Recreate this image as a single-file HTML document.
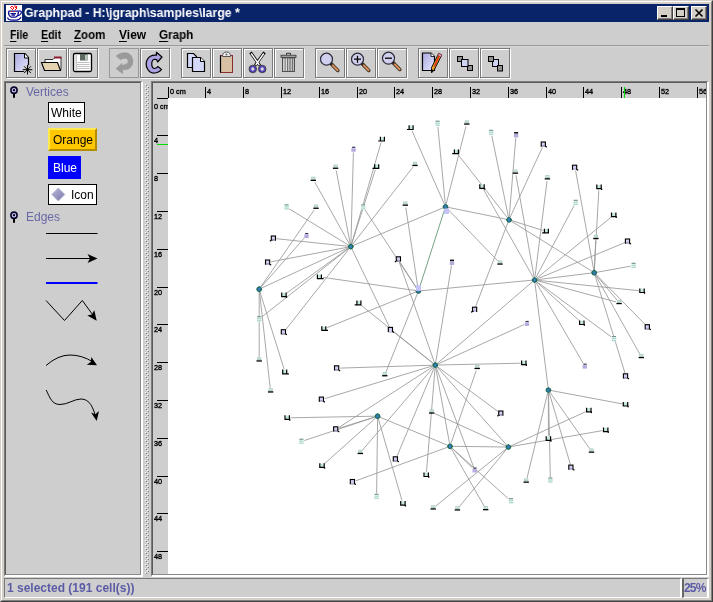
<!DOCTYPE html>
<html><head><meta charset="utf-8"><title>Graphpad</title>
<style>
html,body{margin:0;padding:0;}
body{width:713px;height:602px;position:relative;overflow:hidden;background:#d4d0c8;font-family:"Liberation Sans",sans-serif;}
.a{position:absolute;}
.rl,.menu,.lbl,.vx,#title span,.st{will-change:transform;}
#inner{left:4px;top:22px;width:705px;height:576px;background:#cecece;}
#title{left:4px;top:4px;width:705px;height:18px;background:#0a246a;color:#fff;font-weight:bold;font-size:13px;line-height:18px;}
#title span{position:absolute;left:20px;top:0;white-space:nowrap;transform-origin:0 50%;transform:scaleX(0.942);}
.wb{position:absolute;top:2px;width:16px;height:14px;background:#d4d0c8;box-sizing:border-box;border:1px solid;border-color:#fff #404040 #404040 #fff;box-shadow:inset -1px -1px 0 #808080;}
.menu{top:28px;font-weight:bold;font-size:12px;color:#000;line-height:14px;white-space:nowrap;}
.menu u{text-decoration:underline;text-decoration-thickness:1px;text-underline-offset:1.5px;}
.tb{top:48px;width:30px;height:30px;box-sizing:border-box;border:1px solid #7a7a7a;box-shadow:1px 1px 0 #fff, inset 1px 1px 0 #fff;}
.tbd{top:48px;width:30px;height:30px;box-sizing:border-box;border:1px solid #999;}
.lbl{color:#6868a6;font-size:12px;line-height:14px;}
.vx{box-sizing:border-box;font-size:12px;line-height:14px;color:#000;white-space:nowrap;}
.rt{background:#000;}
.rl{font-size:7.3px;line-height:8px;color:#000;white-space:nowrap;overflow:hidden;-webkit-text-stroke:0.35px #000;}
</style></head><body>
<div class="a" style="left:0;top:0;width:713px;height:602px;box-sizing:border-box;border:1px solid;border-color:#d4d0c8 #404040 #404040 #d4d0c8;"></div>
<div class="a" style="left:1px;top:1px;width:711px;height:600px;box-sizing:border-box;border:1px solid;border-color:#fff #808080 #808080 #fff;"></div>
<div class="a" id="title"><span>Graphpad - H:\jgraph\samples\large *</span>
<div class="wb" style="left:653px"><div class="a" style="left:3px;top:8px;width:6px;height:2px;background:#000"></div></div>
<div class="wb" style="left:669px"><div class="a" style="left:2px;top:1px;width:9px;height:9px;box-sizing:border-box;border:1px solid #000;border-top-width:2px"></div></div>
<div class="wb" style="left:687px"><svg class="a" style="left:0;top:0" width="14" height="12"><path d="M3.5 2.5 L10.5 9.5 M10.5 2.5 L3.5 9.5" stroke="#000" stroke-width="1.6" fill="none"/></svg></div>
</div>
<div class="a" id="inner"></div>

<div class="a menu" style="left:10px;transform-origin:0 0;transform:scaleX(0.88)"><u>F</u>ile</div>
<div class="a menu" style="left:41px;transform-origin:0 0;transform:scaleX(0.89)"><u>E</u>dit</div>
<div class="a menu" style="left:74px;transform-origin:0 0;transform:scaleX(0.96)"><u>Z</u>oom</div>
<div class="a menu" style="left:119px;transform-origin:0 0;transform:scaleX(1.0)"><u>V</u>iew</div>
<div class="a menu" style="left:159px;transform-origin:0 0;transform:scaleX(0.97)"><u>G</u>raph</div>
<div class="a" style="left:4px;top:45px;width:705px;height:1px;background:#999;"></div>
<div class="a" style="left:4px;top:46px;width:705px;height:1px;background:#d8d8d8;"></div>
<div class="a tb" style="left:6px"></div>
<div class="a tb" style="left:37px"></div>
<div class="a tb" style="left:68px"></div>
<div class="a tbd" style="left:109px"></div>
<div class="a tb" style="left:140px"></div>
<div class="a tb" style="left:181px"></div>
<div class="a tb" style="left:212px"></div>
<div class="a tb" style="left:243px"></div>
<div class="a tb" style="left:274px"></div>
<div class="a tb" style="left:315px"></div>
<div class="a tb" style="left:346px"></div>
<div class="a tb" style="left:377px"></div>
<div class="a tb" style="left:418px"></div>
<div class="a tb" style="left:449px"></div>
<div class="a tb" style="left:480px"></div>
<div class="a" style="left:4px;top:81px;width:139px;height:496px;box-sizing:border-box;border-style:solid;border-width:1px 2px 2px 1px;border-color:#7c7c7c #fff #fff #7c7c7c;"></div>
<div class="a" style="left:5px;top:82px;width:136px;height:493px;box-sizing:border-box;border:1px solid;border-color:#5a5a5a #8a8a8a #8a8a8a #5a5a5a;"></div>
<div class="a lbl" style="left:26px;top:85px;">Vertices</div>
<div class="a lbl" style="left:26px;top:210px;">Edges</div>
<div class="a vx" style="left:48px;top:102px;width:37px;height:21px;border:1px solid #000;background:#fff;padding:3px 0 0 2px;">White</div>
<div class="a vx" style="left:48px;top:128px;width:49px;height:23px;background:#ffc800;border:2px solid;border-color:#ffe94d #b38c00 #b38c00 #ffe94d;padding:3px 0 0 3px;">Orange</div>
<div class="a vx" style="left:48px;top:156px;width:33px;height:23px;background:#0000ff;color:#fff;padding:5px 0 0 5px;">Blue</div>
<div class="a vx" style="left:48px;top:184px;width:49px;height:21px;border:1px solid #000;background:#fff;padding:3px 0 0 22px;">Icon</div>

<div class="a" style="left:151px;top:81px;width:558px;height:496px;box-sizing:border-box;border-style:solid;border-width:1px 2px 2px 1px;border-color:#7c7c7c #fff #fff #7c7c7c;"></div>
<div class="a" style="left:152px;top:82px;width:555px;height:493px;box-sizing:border-box;border:1px solid;border-color:#5a5a5a #8a8a8a #8a8a8a #5a5a5a;background:#cecece;"></div>
<div class="a" style="left:168px;top:98px;width:538px;height:476px;background:#fff;"></div>

<div class="a rt" style="left:168px;top:87px;width:1px;height:11px"></div>
<div class="a rl" style="left:170px;top:87.5px;max-width:536px">0 cm</div>
<div class="a rt" style="left:205px;top:87px;width:1px;height:11px"></div>
<div class="a rl" style="left:207px;top:87.5px;max-width:499px">4</div>
<div class="a rt" style="left:243px;top:87px;width:1px;height:11px"></div>
<div class="a rl" style="left:245px;top:87.5px;max-width:461px">8</div>
<div class="a rt" style="left:281px;top:87px;width:1px;height:11px"></div>
<div class="a rl" style="left:283px;top:87.5px;max-width:423px">12</div>
<div class="a rt" style="left:319px;top:87px;width:1px;height:11px"></div>
<div class="a rl" style="left:321px;top:87.5px;max-width:385px">16</div>
<div class="a rt" style="left:357px;top:87px;width:1px;height:11px"></div>
<div class="a rl" style="left:359px;top:87.5px;max-width:347px">20</div>
<div class="a rt" style="left:394px;top:87px;width:1px;height:11px"></div>
<div class="a rl" style="left:396px;top:87.5px;max-width:310px">24</div>
<div class="a rt" style="left:432px;top:87px;width:1px;height:11px"></div>
<div class="a rl" style="left:434px;top:87.5px;max-width:272px">28</div>
<div class="a rt" style="left:470px;top:87px;width:1px;height:11px"></div>
<div class="a rl" style="left:472px;top:87.5px;max-width:234px">32</div>
<div class="a rt" style="left:508px;top:87px;width:1px;height:11px"></div>
<div class="a rl" style="left:510px;top:87.5px;max-width:196px">36</div>
<div class="a rt" style="left:546px;top:87px;width:1px;height:11px"></div>
<div class="a rl" style="left:548px;top:87.5px;max-width:158px">40</div>
<div class="a rt" style="left:583px;top:87px;width:1px;height:11px"></div>
<div class="a rl" style="left:585px;top:87.5px;max-width:121px">44</div>
<div class="a rt" style="left:621px;top:87px;width:1px;height:11px"></div>
<div class="a rl" style="left:623px;top:87.5px;max-width:83px">48</div>
<div class="a rt" style="left:659px;top:87px;width:1px;height:11px"></div>
<div class="a rl" style="left:661px;top:87.5px;max-width:45px">52</div>
<div class="a rt" style="left:697px;top:87px;width:1px;height:11px"></div>
<div class="a rl" style="left:699px;top:87.5px;max-width:7px">56</div>
<div class="a rt" style="left:157px;top:98px;width:11px;height:1px"></div>
<div class="a rl" style="left:154px;width:14px;top:102.5px">0 cm</div>
<div class="a rt" style="left:157px;top:135px;width:11px;height:1px"></div>
<div class="a rl" style="left:154px;width:14px;top:137px">4</div>
<div class="a rt" style="left:157px;top:173px;width:11px;height:1px"></div>
<div class="a rl" style="left:154px;width:14px;top:175px">8</div>
<div class="a rt" style="left:157px;top:211px;width:11px;height:1px"></div>
<div class="a rl" style="left:154px;width:14px;top:213px">12</div>
<div class="a rt" style="left:157px;top:249px;width:11px;height:1px"></div>
<div class="a rl" style="left:154px;width:14px;top:251px">16</div>
<div class="a rt" style="left:157px;top:287px;width:11px;height:1px"></div>
<div class="a rl" style="left:154px;width:14px;top:289px">20</div>
<div class="a rt" style="left:157px;top:324px;width:11px;height:1px"></div>
<div class="a rl" style="left:154px;width:14px;top:326px">24</div>
<div class="a rt" style="left:157px;top:362px;width:11px;height:1px"></div>
<div class="a rl" style="left:154px;width:14px;top:364px">28</div>
<div class="a rt" style="left:157px;top:400px;width:11px;height:1px"></div>
<div class="a rl" style="left:154px;width:14px;top:402px">32</div>
<div class="a rt" style="left:157px;top:438px;width:11px;height:1px"></div>
<div class="a rl" style="left:154px;width:14px;top:440px">36</div>
<div class="a rt" style="left:157px;top:476px;width:11px;height:1px"></div>
<div class="a rl" style="left:154px;width:14px;top:478px">40</div>
<div class="a rt" style="left:157px;top:513px;width:11px;height:1px"></div>
<div class="a rl" style="left:154px;width:14px;top:515px">44</div>
<div class="a rt" style="left:157px;top:551px;width:11px;height:1px"></div>
<div class="a rl" style="left:154px;width:14px;top:553px">48</div>
<div class="a" style="left:624px;top:87px;width:1px;height:11px;background:#00e000"></div>
<div class="a" style="left:157px;top:144px;width:11px;height:1px;background:#00e000"></div>
<div class="a" style="left:4px;top:578px;width:678px;height:20px;box-sizing:border-box;border-style:solid;border-width:1px 2px 1px 1px;border-color:#777 #fff #fff #777;"></div>
<div class="a" style="left:682px;top:578px;width:27px;height:20px;box-sizing:border-box;border-style:solid;border-width:1px 2px 1px 2px;border-color:#777 #fff #fff #666;"></div>
<div class="a st" style="left:7px;top:581px;font-weight:bold;font-size:12px;line-height:15px;color:#5c5ca6;white-space:nowrap;">1 selected (191 cell(s))</div>
<div class="a st" style="left:684px;top:581px;font-weight:bold;font-size:12px;line-height:15px;color:#5c5ca6;letter-spacing:-0.8px;">25%</div>

<svg class="a" style="left:0;top:0" width="713" height="602" viewBox="0 0 713 602">
<defs>
<linearGradient id="gp" x1="0" y1="0" x2="1" y2="1"><stop offset="0" stop-color="#a8a8e0"/><stop offset="1" stop-color="#e8e8ff"/></linearGradient>
<linearGradient id="gd" x1="0" y1="0" x2="1" y2="1"><stop offset="0" stop-color="#b8b8dc"/><stop offset="1" stop-color="#7878a8"/></linearGradient>
<pattern id="bump" x="145" y="84" width="4" height="4" patternUnits="userSpaceOnUse"><rect x="0" y="0" width="1" height="1" fill="#fff"/><rect x="1" y="1" width="1" height="1" fill="#7a7a7a"/><rect x="2" y="2" width="1" height="1" fill="#fff"/><rect x="3" y="3" width="1" height="1" fill="#7a7a7a"/></pattern>
</defs>
<rect x="145" y="84" width="4" height="490" fill="url(#bump)" shape-rendering="crispEdges"/>
<!-- java cup -->
<g shape-rendering="crispEdges"><rect x="6" y="5" width="16" height="16" fill="#fff"/></g>
<g fill="none" stroke="#0a0a8c" stroke-width="1.25">
<path d="M8.500 11 H18.500 M8.500 11.500 Q8.300 15.500 11 17 M18.500 11.500 Q18.500 15.500 16 17 M11 17 H16 M10.500 13.500 H16 M11.500 15.200 H15"/>
<path d="M18.500 11 Q22.500 10.500 21 13.500 Q20 15.500 17.200 16"/>
<path d="M7.500 17.500 Q8 20 11 20 H16.500 Q19.500 20 21 17.200"/>
</g>
<g fill="#ff1010"><rect x="10" y="7" width="1" height="1"/><rect x="11" y="6" width="2" height="1"/><rect x="11" y="8" width="1" height="1"/><rect x="13" y="7" width="1" height="2"/><rect x="14" y="5.5" width="2" height="1"/><rect x="15" y="7" width="1" height="1"/><rect x="16" y="6" width="1" height="3"/><rect x="12" y="9" width="1" height="1"/><rect x="15" y="9" width="1" height="1"/><rect x="11" y="11" width="1" height="1"/><rect x="14" y="11" width="1" height="1"/></g>

<!-- new -->
<path d="M14.5 53.5 H25 L28.5 57.5 V71.5 H14.5 Z" fill="url(#gp)" stroke="#000" stroke-width="1.2"/>
<path d="M24.5 53.5 V58 H28.5" fill="#fff" stroke="#000" stroke-width="1"/>
<path d="M27.5 64.9 V74.5 M22.700 69.700 H32.300 M24.100 66.300 L30.900 73.100 M30.900 66.300 L24.100 73.100" stroke="#cecece" stroke-width="2.6" fill="none"/><path d="M27.5 64.9 V74.5 M22.700 69.700 H32.300 M24.100 66.300 L30.900 73.100 M30.900 66.300 L24.100 73.100" stroke="#000" stroke-width="1" fill="none"/>
<!-- open folder -->
<path d="M45 59.5 H53 L55 57.5 H61 V69.5 H45 Z" fill="#fff" stroke="#333" stroke-width="1"/>
<rect x="54" y="56.5" width="7.5" height="2" fill="#8c1c2c"/>
<path d="M41.5 62.5 H57.5 L60.5 70.5 H44.5 Z" fill="#e6d4b0" stroke="#000" stroke-width="1.1"/>
<!-- save -->
<rect x="73.5" y="53.5" width="18" height="18" rx="1.5" fill="#fff" stroke="#000" stroke-width="1.3"/>
<rect x="80" y="54" width="7.5" height="6.5" fill="#5a6a60"/>
<rect x="85" y="55" width="2" height="5" fill="#b8c4bc"/>
<rect x="75.5" y="54.5" width="1.5" height="16" fill="#c8c8c8"/>
<path d="M77 62.5 H89.500 M77 64.500 H89.500 M77 66.500 H89.500 M77 68.500 H89.500" stroke="#c0c0c0" stroke-width="1"/>
<!-- undo (disabled) -->
<path d="M116.2 56 Q120 52.6 125 52.8 A7.4 8.4 0 0 1 126 69.6 L122.6 69.6 L122.6 73.6 L116 68.7 L121.8 63.4 L122.2 65.8 L125 64.4 A3.2 3.1 0 0 0 125 58.2 Q122 58.2 120.600 59.800 Z" fill="#9a9a9a" stroke="#949494" stroke-width="0.6" stroke-linejoin="round"/>
<!-- redo -->
<path d="M156.4 55.2 Q150 54.600 147.3 59.500 A7.6 9 0 0 0 154.500 73 Q158.500 73 161.600 69.400 L157.800 66.600 Q156.200 68.600 154.300 68.500 A3.2 4.700 0 0 1 154.300 59.300 L156.600 59.500 L157.600 62 L162 57 L156.400 52.300 Z" fill="#aaa2e2" stroke="#000" stroke-width="1.2" stroke-linejoin="round"/>
<!-- copy -->
<path d="M187.500 53.500 H193.500 L196.500 56.500 V67.500 H187.500 Z" fill="#d4d8f8" stroke="#000" stroke-width="1.2"/>
<path d="M192.500 57.500 H200.500 L204.500 61.500 V71.500 H192.500 Z" fill="#d4d8f8" stroke="#000" stroke-width="1.2"/>
<path d="M200.500 57.500 V61.500 H204.500" fill="#fff" stroke="#000" stroke-width="1"/>
<!-- paste -->
<rect x="220.500" y="55.500" width="12" height="17" fill="#d8c0a4" stroke="#8c2c2c" stroke-width="1"/>
<path d="M220.500 55.500 V72.500" stroke="#000" stroke-width="1.2"/>
<path d="M222.500 56.500 Q222.500 52 226.500 52 Q230.500 52 230.500 56.500 Z" fill="#f0f0f0" stroke="#555" stroke-width="1"/>
<circle cx="226.500" cy="54.500" r="1" fill="#666"/>
<!-- cut -->
<path d="M250.500 52.300 L259.800 65.500 M264.500 52.300 L255.200 65.500" stroke="#000" stroke-width="3" fill="none"/>
<path d="M251.200 53.500 L259.300 65 M263.800 53.500 L255.700 65" stroke="#fff" stroke-width="1.400" fill="none"/>
<circle cx="252.800" cy="69" r="2.600" fill="#d8d8e0" stroke="#5444b8" stroke-width="1.900"/>
<circle cx="262.200" cy="69" r="2.600" fill="#d8d8e0" stroke="#5444b8" stroke-width="1.900"/>
<circle cx="252.800" cy="69" r="3.800" fill="none" stroke="#000" stroke-width="0.600"/>
<circle cx="262.200" cy="69" r="3.800" fill="none" stroke="#000" stroke-width="0.600"/>
<!-- delete -->
<rect x="282.500" y="58" width="12" height="13.500" fill="#c0c0c0" stroke="#505050" stroke-width="1"/>
<path d="M285 58.500 V71 M287.500 58.500 V71 M290 58.500 V71 M292.500 58.500 V71" stroke="#686868" stroke-width="0.900"/>
<path d="M284 58.500 V71 M286.500 58.500 V71" stroke="#e8e8e8" stroke-width="0.700"/>
<rect x="281" y="55.200" width="15" height="2.300" fill="#a0a0a0" stroke="#383838" stroke-width="0.800"/>
<path d="M286.500 55 V53.300 H290.500 V55" fill="none" stroke="#383838" stroke-width="1"/>
<!-- zoom icons -->
<g>
<path d="M331.200 63.800 L337.800 70.400" stroke="#3a2a1a" stroke-width="3.600" stroke-linecap="round"/>
<path d="M332.800 65.400 L337.600 70.200" stroke="#d8905c" stroke-width="2" stroke-linecap="round"/>
<circle cx="326.500" cy="59.200" r="6" fill="#d0d0ee" stroke="#2c2c3c" stroke-width="1.200"/>
</g>
<g transform="translate(31,0)">
<path d="M331.200 63.800 L337.800 70.400" stroke="#3a2a1a" stroke-width="3.600" stroke-linecap="round"/>
<path d="M332.800 65.400 L337.600 70.200" stroke="#d8905c" stroke-width="2" stroke-linecap="round"/>
<circle cx="326.500" cy="59.200" r="6" fill="#d0d0ee" stroke="#2c2c3c" stroke-width="1.200"/>
</g>
<g transform="translate(62,-1)">
<path d="M331.200 63.800 L337.800 70.400" stroke="#3a2a1a" stroke-width="3.600" stroke-linecap="round"/>
<path d="M332.800 65.400 L337.600 70.200" stroke="#d8905c" stroke-width="2" stroke-linecap="round"/>
<circle cx="326.500" cy="59.200" r="6" fill="#d0d0ee" stroke="#2c2c3c" stroke-width="1.200"/>
</g>
<path d="M354 59.200 H361 M357.500 55.700 V62.700" stroke="#000" stroke-width="1.300"/>
<path d="M385 58.200 H392" stroke="#000" stroke-width="1.300"/>
<!-- edit -->
<path d="M422.500 53 H431 L434.500 56.500 V70.500 H422.500 Z" fill="url(#gp)" stroke="#000" stroke-width="1.200"/>
<path d="M431 53 V56.500 H434.500" fill="#fff" stroke="#000" stroke-width="0.800"/>
<path d="M438.800 53.300 L441.800 55 L434.400 69.500 L431.600 72.800 L431.400 67.800 Z" fill="#e8a020" stroke="#000" stroke-width="0.900"/>
<path d="M440 54 L434.400 66.500" stroke="#e02020" stroke-width="1.200"/>
<path d="M438.800 53.300 L441.800 55 L440.800 57 L437.800 55.300 Z" fill="#f0a0b0" stroke="#803040" stroke-width="0.600"/>
<path d="M431.400 69 L431.600 72.800 L433.800 70.400 Z" fill="#000"/>
<!-- to front -->
<g stroke="#000" stroke-width="1">
<rect x="457.500" y="56.500" width="5" height="5" fill="#909090"/>
<rect x="467.500" y="65.500" width="5" height="5" fill="#909090"/>
<rect x="461.500" y="59.500" width="6.500" height="7" fill="#d0d4f4"/>
<rect x="492.500" y="59.500" width="6" height="7" fill="#d0d4f4"/>
<rect x="488.500" y="56.500" width="5" height="5" fill="#909090"/>
<rect x="497.500" y="65.500" width="5" height="5.500" fill="#909090"/>
</g>
<!-- pins -->
<g><circle cx="14" cy="90.200" r="3.100" fill="#c8c0f4" stroke="#06062c" stroke-width="1.600"/><circle cx="14" cy="90.200" r="1.100" fill="#000"/><path d="M14 93.500 V97.800" stroke="#000" stroke-width="2"/></g>
<g transform="translate(0,125)"><circle cx="14" cy="90.200" r="3.100" fill="#c8c0f4" stroke="#06062c" stroke-width="1.600"/><circle cx="14" cy="90.200" r="1.100" fill="#000"/><path d="M14 93.500 V97.800" stroke="#000" stroke-width="2"/></g>
<!-- diamond -->
<path d="M58.300 188 L64.800 194.500 L58.300 201 L51.800 194.500 Z" fill="url(#gd)" stroke="#b0b0d0" stroke-width="0.800"/>
<!-- edges palette -->
<g stroke="#000" stroke-width="1" fill="none">
<path d="M46 233.500 H97.500"/>
<path d="M46 258.500 H92"/>
<path d="M46 300.500 L64.500 320.500 L82.300 300.500 L94 316.500"/>
<path d="M46 365.500 Q58 355 70 355 Q82 355 93 362"/>
<path d="M46.200 390 C50 398 52 404.500 60 404.500 C68 404.500 74 399 81 399 C90 399 93 408 95.500 416"/>
</g>
<path d="M46 283 H97.500" stroke="#0000ff" stroke-width="2"/>
<path d="M97.500 258.500 L87.500 254 L90 258.500 L87.500 263 Z" fill="#000"/>
<path d="M96.700 320.700 L87.300 315.500 L91.800 314.500 L94.300 310.300 Z" fill="#000"/>
<path d="M97 365.300 L86.800 364.800 L90.800 362 L91.300 357 Z" fill="#000"/>
<path d="M96.700 421 L91 412.500 L95.300 414.300 L99 411 Z" fill="#000"/>

<g stroke="#989898" stroke-width="0.85" fill="none">
<path d="M351.5 244.2 L381.1 142.5 M350.9 244.1 L353.4 152.4 M350.3 244.1 L336.2 170.5 M351.6 244.2 L375.3 169.8 M349.6 244.4 L314.9 182.3 M348.7 245.3 L289.3 208.9 M260.6 287.1 L314.2 210.0 M417.0 288.9 L365.0 209.9 M352.3 244.6 L413.0 167.1 M444.5 204.5 L412.0 130.8 M445.3 204.3 L437.9 126.7 M446.1 204.4 L466.0 126.3 M507.5 217.8 L458.0 154.5 M418.0 288.5 L405.8 207.5 M348.3 246.3 L276.4 238.7 M260.9 287.3 L304.4 237.9 M348.3 247.1 L271.1 261.8 M417.1 288.9 L399.9 261.9 M434.5 362.7 L399.3 262.2 M435.7 362.6 L451.5 265.4 M415.9 290.6 L323.0 277.4 M348.8 248.1 L286.5 293.2 M433.4 363.5 L361.0 305.2 M348.8 248.2 L261.7 317.0 M349.3 248.6 L285.8 329.6 M416.1 291.9 L327.2 327.6 M351.9 248.9 L389.4 326.9 M433.3 363.5 L393.3 331.8 M259.2 291.7 L259.2 356.9 M259.9 291.6 L284.1 369.1 M432.8 365.2 L340.2 368.1 M417.5 293.3 L386.0 371.9 M259.5 291.7 L270.2 387.9 M432.9 365.8 L324.9 398.6 M375.1 416.2 L290.4 417.8 M506.1 446.0 L434.6 413.5 M375.2 416.9 L339.2 428.2 M433.2 366.5 L338.8 427.5 M375.2 417.0 L304.4 440.5 M433.7 367.0 L362.4 450.2 M434.3 367.4 L397.0 456.2 M375.7 417.9 L324.4 463.8 M435.1 367.6 L426.5 471.8 M447.7 447.2 L355.8 480.8 M451.8 448.0 L472.4 467.8 M436.2 367.4 L473.6 467.0 M377.6 418.7 L376.6 493.4 M378.3 418.6 L402.0 500.6 M451.9 448.0 L508.6 498.9 M506.5 448.6 L435.7 506.1 M506.8 448.9 L459.4 506.6 M451.2 448.5 L484.1 506.0 M508.5 217.4 L491.8 135.7 M509.2 217.3 L515.8 137.8 M510.0 217.5 L542.4 147.3 M593.8 270.2 L575.6 170.7 M534.2 277.5 L516.0 175.5 M534.9 277.5 L547.0 181.2 M533.4 277.8 L483.6 189.6 M594.3 270.2 L598.8 190.4 M535.8 277.8 L574.2 205.4 M536.5 278.4 L611.2 217.1 M511.4 220.5 L542.9 230.4 M594.3 270.2 L595.7 240.9 M536.9 279.0 L624.9 242.6 M447.2 208.6 L497.8 260.9 M596.7 272.3 L630.5 266.2 M537.1 280.3 L638.8 290.7 M537.0 280.6 L616.0 301.9 M595.8 274.6 L617.1 300.2 M508.1 222.1 L475.6 306.6 M437.6 364.1 L524.0 324.7 M536.4 281.7 L579.4 320.8 M596.0 274.5 L645.5 324.8 M536.6 281.5 L611.4 337.0 M595.4 274.9 L639.7 353.9 M437.8 365.0 L520.6 363.2 M535.9 282.2 L583.2 363.3 M450.8 443.9 L476.2 370.6 M594.9 275.1 L625.0 373.1 M550.9 390.5 L622.4 403.9 M510.7 446.0 L585.9 411.6 M437.3 366.6 L498.0 411.5 M510.9 446.6 L602.5 430.6 M548.4 392.5 L548.4 435.7 M549.8 392.0 L589.7 448.7 M549.1 392.4 L570.4 464.4 M547.8 392.4 L527.0 478.2 M548.5 392.5 L550.3 477.1 M348.5 247.7 L261.5 288.1 M353.1 245.6 L443.2 207.8 M447.9 207.3 L506.6 219.3 M511.1 221.1 L592.1 271.4 M420.9 290.8 L532.1 280.2 M537.1 279.7 L591.7 273.0 M437.2 363.5 L532.7 281.6 M435.7 367.6 L449.6 443.8 M437.0 367.0 L506.7 445.1 M379.9 417.2 L447.7 445.3 M452.5 446.3 L505.9 447.0 M534.9 282.5 L548.1 387.5"/>
</g>
<path d="M444.7 209.2 L419.2 288.6" stroke="#74a286" stroke-width="1" fill="none"/>
<rect x="380.6" y="137.1" width="3.6" height="3.6" fill="#c4e8e0"/><path d="M380.4 136.8 V141.4 M384.4 136.8 V141.4 M378.2 141.0 H385.0" stroke="#000" stroke-width="1.2" fill="none"/>
<rect x="351.3" y="148.3" width="4.4" height="3.4" fill="#b8a8e0"/><rect x="352.1" y="146.7" width="3.2" height="1.2" fill="#34344c"/>
<rect x="333.5" y="164.6" width="4.2" height="2.8" fill="#a4c8c0"/><rect x="334.1" y="165.4" width="3" height="1" fill="#d8ecea"/><rect x="332.9" y="167.6" width="5.4" height="1.3" fill="#000"/>
<rect x="374.9" y="164.5" width="3.6" height="3.6" fill="#c4e8e0"/><path d="M374.7 164.2 V168.8 M378.7 164.2 V168.8 M372.5 168.4 H379.3" stroke="#000" stroke-width="1.2" fill="none"/>
<rect x="311.2" y="176.7" width="4.2" height="2.8" fill="#a4c8c0"/><rect x="311.8" y="177.5" width="3" height="1" fill="#d8ecea"/><rect x="310.6" y="179.7" width="5.4" height="1.3" fill="#000"/>
<rect x="284.4" y="204.4" width="4.4" height="5.4" fill="#e4f4f0"/><path d="M284.6 204.9 h4" stroke="#5a7a74" stroke-width="0.9"/><path d="M284.4 206.9 h4.4 M284.4 208.9 h4.4" stroke="#a0d0c6" stroke-width="0.9"/>
<rect x="313.9" y="204.6" width="4.2" height="2.8" fill="#a4c8c0"/><rect x="314.5" y="205.4" width="3" height="1" fill="#d8ecea"/><rect x="313.3" y="207.6" width="5.4" height="1.3" fill="#000"/>
<rect x="361.0" y="204.4" width="4.4" height="5.4" fill="#e4f4f0"/><path d="M361.2 204.9 h4" stroke="#5a7a74" stroke-width="0.9"/><path d="M361.0 206.9 h4.4 M361.0 208.9 h4.4" stroke="#a0d0c6" stroke-width="0.9"/>
<rect x="412.9" y="161.8" width="4.2" height="2.8" fill="#a4c8c0"/><rect x="413.5" y="162.6" width="3" height="1" fill="#d8ecea"/><rect x="412.3" y="164.8" width="5.4" height="1.3" fill="#000"/>
<rect x="409.3" y="125.6" width="3.6" height="3.6" fill="#c4e8e0"/><path d="M409.1 125.3 V129.9 M413.1 125.3 V129.9 M406.9 129.5 H413.7" stroke="#000" stroke-width="1.2" fill="none"/>
<rect x="435.4" y="120.7" width="4.4" height="5.4" fill="#e4f4f0"/><path d="M435.6 121.2 h4" stroke="#5a7a74" stroke-width="0.9"/><path d="M435.4 123.2 h4.4 M435.4 125.2 h4.4" stroke="#a0d0c6" stroke-width="0.9"/>
<rect x="464.7" y="120.4" width="4.2" height="2.8" fill="#a4c8c0"/><rect x="465.3" y="121.2" width="3" height="1" fill="#d8ecea"/><rect x="464.1" y="123.4" width="5.4" height="1.3" fill="#000"/>
<rect x="454.6" y="149.7" width="3.6" height="3.6" fill="#c4e8e0"/><path d="M454.4 149.4 V154.0 M458.4 149.4 V154.0 M452.2 153.6 H459.0" stroke="#000" stroke-width="1.2" fill="none"/>
<rect x="403.2" y="201.5" width="4.2" height="2.8" fill="#a4c8c0"/><rect x="403.8" y="202.3" width="3" height="1" fill="#d8ecea"/><rect x="402.6" y="204.5" width="5.4" height="1.3" fill="#000"/>
<rect x="271.3" y="236.0" width="4.2" height="4.2" fill="#d4ccf0" stroke="#000" stroke-width="1.1"/><path d="M272.5 240.2 H274.9" stroke="#d4ccf0" stroke-width="1.2"/><rect x="269.8" y="240.1" width="1.3" height="1.3" fill="#000"/>
<rect x="304.3" y="234.6" width="4.4" height="3.4" fill="#b8a8e0"/><rect x="305.1" y="233.0" width="3.2" height="1.2" fill="#34344c"/>
<rect x="265.5" y="260.0" width="4.2" height="4.2" fill="#d4ccf0" stroke="#000" stroke-width="1.1"/><path d="M266.1 264.2 H269.1" stroke="#d4ccf0" stroke-width="1.2"/><rect x="269.9" y="264.1" width="1.3" height="1.3" fill="#000"/>
<rect x="396.3" y="256.8" width="4.2" height="4.2" fill="#d4ccf0" stroke="#000" stroke-width="1.1"/><path d="M397.5 261.0 H399.9" stroke="#d4ccf0" stroke-width="1.2"/><rect x="394.8" y="260.9" width="1.3" height="1.3" fill="#000"/>
<rect x="449.8" y="261.6" width="4.4" height="3.4" fill="#b4acd8"/><rect x="450.0" y="259.6" width="4" height="1.6" fill="#101018"/>
<rect x="317.6" y="274.7" width="3.6" height="3.6" fill="#c4e8e0"/><path d="M317.4 274.4 V279.0 M321.4 274.4 V279.0 M316.8 278.6 H323.6" stroke="#000" stroke-width="1.2" fill="none"/>
<rect x="282.1" y="292.8" width="3.6" height="3.6" fill="#c4e8e0"/><path d="M281.7 292.5 V296.6 H286.1 V292.5" stroke="#000" stroke-width="1.2" fill="none"/><rect x="285.8" y="296.3" width="1.3" height="1.6" fill="#000"/>
<rect x="357.1" y="300.9" width="3.6" height="3.6" fill="#c4e8e0"/><path d="M356.9 300.6 V305.2 M360.9 300.6 V305.2 M354.7 304.8 H361.5" stroke="#000" stroke-width="1.2" fill="none"/>
<rect x="257.0" y="316.2" width="4.4" height="5.4" fill="#e4f4f0"/><path d="M257.2 316.7 h4" stroke="#5a7a74" stroke-width="0.9"/><path d="M257.0 318.7 h4.4 M257.0 320.7 h4.4" stroke="#a0d0c6" stroke-width="0.9"/>
<rect x="281.3" y="329.7" width="4.2" height="4.2" fill="#d4ccf0" stroke="#000" stroke-width="1.1"/><path d="M281.9 333.9 H284.9" stroke="#d4ccf0" stroke-width="1.2"/><rect x="285.7" y="333.8" width="1.3" height="1.3" fill="#000"/>
<rect x="322.0" y="326.5" width="3.6" height="3.6" fill="#c4e8e0"/><path d="M321.8 326.2 V330.8 M325.8 326.2 V330.8 M321.2 330.4 H328.0" stroke="#000" stroke-width="1.2" fill="none"/>
<rect x="388.3" y="327.4" width="4.2" height="4.2" fill="#d4ccf0" stroke="#000" stroke-width="1.1"/><path d="M388.9 331.6 H391.9" stroke="#d4ccf0" stroke-width="1.2"/><rect x="392.7" y="331.5" width="1.3" height="1.3" fill="#000"/>
<rect x="257.1" y="357.3" width="4.2" height="2.8" fill="#a4c8c0"/><rect x="257.7" y="358.1" width="3" height="1" fill="#d8ecea"/><rect x="256.5" y="360.3" width="5.4" height="1.3" fill="#000"/>
<rect x="282.9" y="369.9" width="3.6" height="3.6" fill="#c4e8e0"/><path d="M282.7 369.6 V374.2 M286.7 369.6 V374.2 M282.1 373.8 H288.9" stroke="#000" stroke-width="1.2" fill="none"/>
<rect x="334.5" y="365.8" width="4.2" height="4.2" fill="#d4ccf0" stroke="#000" stroke-width="1.1"/><path d="M335.1 370.0 H338.1" stroke="#d4ccf0" stroke-width="1.2"/><rect x="338.9" y="369.9" width="1.3" height="1.3" fill="#000"/>
<rect x="382.7" y="372.1" width="4.2" height="2.8" fill="#a4c8c0"/><rect x="383.3" y="372.9" width="3" height="1" fill="#d8ecea"/><rect x="382.1" y="375.1" width="5.4" height="1.3" fill="#000"/>
<rect x="268.5" y="388.3" width="4.2" height="2.8" fill="#a4c8c0"/><rect x="269.1" y="389.1" width="3" height="1" fill="#d8ecea"/><rect x="267.9" y="391.3" width="5.4" height="1.3" fill="#000"/>
<rect x="319.3" y="397.1" width="4.2" height="4.2" fill="#d4ccf0" stroke="#000" stroke-width="1.1"/><path d="M319.9 401.3 H322.9" stroke="#d4ccf0" stroke-width="1.2"/><rect x="323.7" y="401.2" width="1.3" height="1.3" fill="#000"/>
<rect x="285.4" y="415.6" width="3.6" height="3.6" fill="#c4e8e0"/><path d="M285.0 415.3 V419.4 H289.4 V415.3" stroke="#000" stroke-width="1.2" fill="none"/><rect x="289.1" y="419.1" width="1.3" height="1.6" fill="#000"/>
<rect x="429.6" y="409.4" width="4.2" height="2.8" fill="#a4c8c0"/><rect x="430.2" y="410.2" width="3" height="1" fill="#d8ecea"/><rect x="429.0" y="412.4" width="5.4" height="1.3" fill="#000"/>
<rect x="333.6" y="426.8" width="4.2" height="4.2" fill="#d4ccf0" stroke="#000" stroke-width="1.1"/><path d="M334.2 431.0 H337.2" stroke="#d4ccf0" stroke-width="1.2"/><rect x="338.0" y="430.9" width="1.3" height="1.3" fill="#000"/>
<rect x="299.2" y="438.7" width="4.4" height="5.4" fill="#e4f4f0"/><path d="M299.4 439.2 h4" stroke="#5a7a74" stroke-width="0.9"/><path d="M299.2 441.2 h4.4 M299.2 443.2 h4.4" stroke="#a0d0c6" stroke-width="0.9"/>
<rect x="358.2" y="449.8" width="4.2" height="2.8" fill="#a4c8c0"/><rect x="358.8" y="450.6" width="3" height="1" fill="#d8ecea"/><rect x="357.6" y="452.8" width="5.4" height="1.3" fill="#000"/>
<rect x="393.3" y="456.8" width="4.2" height="4.2" fill="#d4ccf0" stroke="#000" stroke-width="1.1"/><path d="M393.9 461.0 H396.9" stroke="#d4ccf0" stroke-width="1.2"/><rect x="397.7" y="460.9" width="1.3" height="1.3" fill="#000"/>
<rect x="320.2" y="463.6" width="3.6" height="3.6" fill="#c4e8e0"/><path d="M319.8 463.3 V467.4 H324.2 V463.3" stroke="#000" stroke-width="1.2" fill="none"/><rect x="323.9" y="467.1" width="1.3" height="1.6" fill="#000"/>
<rect x="424.4" y="472.7" width="3.6" height="3.6" fill="#c4e8e0"/><path d="M424.0 472.4 V476.5 H428.4 V472.4" stroke="#000" stroke-width="1.2" fill="none"/><rect x="428.1" y="476.2" width="1.3" height="1.6" fill="#000"/>
<rect x="350.3" y="479.5" width="4.2" height="4.2" fill="#d4ccf0" stroke="#000" stroke-width="1.1"/><path d="M350.9 483.7 H353.9" stroke="#d4ccf0" stroke-width="1.2"/><rect x="354.7" y="483.6" width="1.3" height="1.3" fill="#000"/>
<rect x="472.5" y="469.1" width="4.4" height="3.4" fill="#b8a8e0"/><rect x="473.3" y="467.5" width="3.2" height="1.2" fill="#34344c"/>
<rect x="374.4" y="493.8" width="4.4" height="5.4" fill="#e4f4f0"/><path d="M374.6 494.3 h4" stroke="#5a7a74" stroke-width="0.9"/><path d="M374.4 496.3 h4.4 M374.4 498.3 h4.4" stroke="#a0d0c6" stroke-width="0.9"/>
<rect x="401.1" y="501.4" width="3.6" height="3.6" fill="#c4e8e0"/><path d="M400.7 501.1 V505.2 H405.1 V501.1" stroke="#000" stroke-width="1.2" fill="none"/><rect x="404.8" y="504.9" width="1.3" height="1.6" fill="#000"/>
<rect x="508.8" y="498.2" width="4.4" height="5.4" fill="#e4f4f0"/><path d="M509.0 498.7 h4" stroke="#5a7a74" stroke-width="0.9"/><path d="M508.8 500.7 h4.4 M508.8 502.7 h4.4" stroke="#a0d0c6" stroke-width="0.9"/>
<rect x="431.1" y="505.3" width="4.2" height="2.8" fill="#a4c8c0"/><rect x="431.7" y="506.1" width="3" height="1" fill="#d8ecea"/><rect x="430.5" y="508.3" width="5.4" height="1.3" fill="#000"/>
<rect x="455.3" y="506.3" width="4.2" height="2.8" fill="#a4c8c0"/><rect x="455.9" y="507.1" width="3" height="1" fill="#d8ecea"/><rect x="454.7" y="509.3" width="5.4" height="1.3" fill="#000"/>
<rect x="483.6" y="506.0" width="4.2" height="2.8" fill="#a4c8c0"/><rect x="484.2" y="506.8" width="3" height="1" fill="#d8ecea"/><rect x="483.0" y="509.0" width="5.4" height="1.3" fill="#000"/>
<rect x="489.0" y="129.8" width="4.4" height="5.4" fill="#e4f4f0"/><path d="M489.2 130.3 h4" stroke="#5a7a74" stroke-width="0.9"/><path d="M489.0 132.3 h4.4 M489.0 134.3 h4.4" stroke="#a0d0c6" stroke-width="0.9"/>
<rect x="513.9" y="134.0" width="4.4" height="3.4" fill="#b4acd8"/><rect x="514.1" y="132.0" width="4" height="1.6" fill="#101018"/>
<rect x="541.2" y="142.0" width="4.2" height="4.2" fill="#d4ccf0" stroke="#000" stroke-width="1.1"/><path d="M541.8 146.2 H544.8" stroke="#d4ccf0" stroke-width="1.2"/><rect x="545.6" y="146.1" width="1.3" height="1.3" fill="#000"/>
<rect x="572.5" y="165.2" width="4.2" height="4.2" fill="#d4ccf0" stroke="#000" stroke-width="1.1"/><path d="M573.1 169.4 H576.1" stroke="#d4ccf0" stroke-width="1.2"/><rect x="576.9" y="169.3" width="1.3" height="1.3" fill="#000"/>
<rect x="513.3" y="169.5" width="4.2" height="2.8" fill="#a4c8c0"/><rect x="513.9" y="170.3" width="3" height="1" fill="#d8ecea"/><rect x="512.7" y="172.5" width="5.4" height="1.3" fill="#000"/>
<rect x="545.3" y="175.2" width="4.2" height="2.8" fill="#a4c8c0"/><rect x="545.9" y="176.0" width="3" height="1" fill="#d8ecea"/><rect x="544.7" y="178.2" width="5.4" height="1.3" fill="#000"/>
<rect x="480.2" y="184.5" width="3.6" height="3.6" fill="#c4e8e0"/><path d="M479.8 184.2 V188.3 H484.2 V184.2" stroke="#000" stroke-width="1.2" fill="none"/><rect x="483.9" y="188.0" width="1.3" height="1.6" fill="#000"/>
<rect x="597.2" y="184.9" width="3.6" height="3.6" fill="#c4e8e0"/><path d="M596.8 184.6 V188.7 H601.2 V184.6" stroke="#000" stroke-width="1.2" fill="none"/><rect x="600.9" y="188.4" width="1.3" height="1.6" fill="#000"/>
<rect x="573.5" y="199.8" width="4.4" height="5.4" fill="#e4f4f0"/><path d="M573.7 200.3 h4" stroke="#5a7a74" stroke-width="0.9"/><path d="M573.5 202.3 h4.4 M573.5 204.3 h4.4" stroke="#a0d0c6" stroke-width="0.9"/>
<rect x="611.9" y="212.8" width="3.6" height="3.6" fill="#c4e8e0"/><path d="M611.5 212.5 V216.6 H615.9 V212.5" stroke="#000" stroke-width="1.2" fill="none"/><rect x="615.6" y="216.3" width="1.3" height="1.6" fill="#000"/>
<rect x="544.6" y="229.0" width="3.6" height="3.6" fill="#c4e8e0"/><path d="M544.4 228.7 V233.3 M548.4 228.7 V233.3 M542.2 232.9 H549.0" stroke="#000" stroke-width="1.2" fill="none"/>
<rect x="593.8" y="234.9" width="4.2" height="2.8" fill="#a4c8c0"/><rect x="594.4" y="235.7" width="3" height="1" fill="#d8ecea"/><rect x="593.2" y="237.9" width="5.4" height="1.3" fill="#000"/>
<rect x="625.4" y="239.0" width="4.2" height="4.2" fill="#d4ccf0" stroke="#000" stroke-width="1.1"/><path d="M626.0 243.2 H629.0" stroke="#d4ccf0" stroke-width="1.2"/><rect x="629.8" y="243.1" width="1.3" height="1.3" fill="#000"/>
<rect x="497.9" y="260.4" width="4.2" height="2.8" fill="#a4c8c0"/><rect x="498.5" y="261.2" width="3" height="1" fill="#d8ecea"/><rect x="497.3" y="263.4" width="5.4" height="1.3" fill="#000"/>
<rect x="631.4" y="262.8" width="4.4" height="5.4" fill="#e4f4f0"/><path d="M631.6 263.3 h4" stroke="#5a7a74" stroke-width="0.9"/><path d="M631.4 265.3 h4.4 M631.4 267.3 h4.4" stroke="#a0d0c6" stroke-width="0.9"/>
<rect x="640.2" y="288.7" width="3.6" height="3.6" fill="#c4e8e0"/><path d="M639.8 288.4 V292.5 H644.2 V288.4" stroke="#000" stroke-width="1.2" fill="none"/><rect x="643.9" y="292.2" width="1.3" height="1.6" fill="#000"/>
<rect x="617.0" y="299.9" width="4.2" height="2.8" fill="#a4c8c0"/><rect x="617.6" y="300.7" width="3" height="1" fill="#d8ecea"/><rect x="616.4" y="302.9" width="5.4" height="1.3" fill="#000"/>
<rect x="472.5" y="307.2" width="4.2" height="4.2" fill="#d4ccf0" stroke="#000" stroke-width="1.1"/><path d="M473.7 311.4 H476.1" stroke="#d4ccf0" stroke-width="1.2"/><rect x="471.0" y="311.3" width="1.3" height="1.3" fill="#000"/>
<rect x="524.7" y="322.5" width="4.4" height="3.4" fill="#b8a8e0"/><rect x="525.5" y="320.9" width="3.2" height="1.2" fill="#34344c"/>
<rect x="580.0" y="320.7" width="3.6" height="3.6" fill="#c4e8e0"/><path d="M579.6 320.4 V324.5 H584.0 V320.4" stroke="#000" stroke-width="1.2" fill="none"/><rect x="583.7" y="324.2" width="1.3" height="1.6" fill="#000"/>
<rect x="645.2" y="324.7" width="4.2" height="4.2" fill="#d4ccf0" stroke="#000" stroke-width="1.1"/><path d="M645.8 328.9 H648.8" stroke="#d4ccf0" stroke-width="1.2"/><rect x="649.6" y="328.8" width="1.3" height="1.3" fill="#000"/>
<rect x="611.8" y="336.1" width="4.4" height="5.4" fill="#e4f4f0"/><path d="M612.0 336.6 h4" stroke="#5a7a74" stroke-width="0.9"/><path d="M611.8 338.6 h4.4 M611.8 340.6 h4.4" stroke="#a0d0c6" stroke-width="0.9"/>
<rect x="639.2" y="353.9" width="4.2" height="2.8" fill="#a4c8c0"/><rect x="639.8" y="354.7" width="3" height="1" fill="#d8ecea"/><rect x="638.6" y="356.9" width="5.4" height="1.3" fill="#000"/>
<rect x="522.0" y="360.8" width="3.6" height="3.6" fill="#c4e8e0"/><path d="M521.6 360.5 V364.6 H526.0 V360.5" stroke="#000" stroke-width="1.2" fill="none"/><rect x="525.7" y="364.3" width="1.3" height="1.6" fill="#000"/>
<rect x="582.6" y="365.2" width="4.4" height="3.4" fill="#b8a8e0"/><rect x="583.4" y="363.6" width="3.2" height="1.2" fill="#34344c"/>
<rect x="475.1" y="364.8" width="4.2" height="2.8" fill="#a4c8c0"/><rect x="475.7" y="365.6" width="3" height="1" fill="#d8ecea"/><rect x="474.5" y="367.8" width="5.4" height="1.3" fill="#000"/>
<rect x="623.4" y="373.8" width="4.2" height="4.2" fill="#d4ccf0" stroke="#000" stroke-width="1.1"/><path d="M624.0 378.0 H627.0" stroke="#d4ccf0" stroke-width="1.2"/><rect x="627.8" y="377.9" width="1.3" height="1.3" fill="#000"/>
<rect x="623.7" y="402.2" width="3.6" height="3.6" fill="#c4e8e0"/><path d="M623.3 401.9 V406.0 H627.7 V401.9" stroke="#000" stroke-width="1.2" fill="none"/><rect x="627.4" y="405.7" width="1.3" height="1.6" fill="#000"/>
<rect x="587.0" y="408.0" width="3.6" height="3.6" fill="#c4e8e0"/><path d="M586.6 407.7 V411.8 H591.0 V407.7" stroke="#000" stroke-width="1.2" fill="none"/><rect x="590.7" y="411.5" width="1.3" height="1.6" fill="#000"/>
<rect x="498.7" y="411.0" width="4.2" height="4.2" fill="#d4ccf0" stroke="#000" stroke-width="1.1"/><path d="M499.9 415.2 H502.3" stroke="#d4ccf0" stroke-width="1.2"/><rect x="497.2" y="415.1" width="1.3" height="1.3" fill="#000"/>
<rect x="603.9" y="427.8" width="3.6" height="3.6" fill="#c4e8e0"/><path d="M603.5 427.5 V431.6 H607.9 V427.5" stroke="#000" stroke-width="1.2" fill="none"/><rect x="607.6" y="431.3" width="1.3" height="1.6" fill="#000"/>
<rect x="546.6" y="436.6" width="3.6" height="3.6" fill="#c4e8e0"/><path d="M546.2 436.3 V440.4 H550.6 V436.3" stroke="#000" stroke-width="1.2" fill="none"/><rect x="550.3" y="440.1" width="1.3" height="1.6" fill="#000"/>
<rect x="589.4" y="448.5" width="4.2" height="2.8" fill="#a4c8c0"/><rect x="590.0" y="449.3" width="3" height="1" fill="#d8ecea"/><rect x="588.8" y="451.5" width="5.4" height="1.3" fill="#000"/>
<rect x="568.8" y="465.1" width="4.2" height="4.2" fill="#d4ccf0" stroke="#000" stroke-width="1.1"/><path d="M569.4 469.3 H572.4" stroke="#d4ccf0" stroke-width="1.2"/><rect x="573.2" y="469.2" width="1.3" height="1.3" fill="#000"/>
<rect x="524.1" y="478.5" width="4.2" height="2.8" fill="#a4c8c0"/><rect x="524.7" y="479.3" width="3" height="1" fill="#d8ecea"/><rect x="523.5" y="481.5" width="5.4" height="1.3" fill="#000"/>
<rect x="548.2" y="477.5" width="4.4" height="5.4" fill="#e4f4f0"/><path d="M548.4 478.0 h4" stroke="#5a7a74" stroke-width="0.9"/><path d="M548.2 480.0 h4.4 M548.2 482.0 h4.4" stroke="#a0d0c6" stroke-width="0.9"/>
<circle cx="350.8" cy="246.6" r="2.6" fill="#1c6c58"/><path d="M350.8 243.5 L353.9 246.6 L350.8 249.7 L347.7 246.6 Z" fill="#1c6c58"/><ellipse cx="350.8" cy="246.6" rx="1.3" ry="1.7" fill="#3c7cc8"/>
<circle cx="259.2" cy="289.2" r="2.6" fill="#1c6c58"/><path d="M259.2 286.1 L262.3 289.2 L259.2 292.3 L256.1 289.2 Z" fill="#1c6c58"/><ellipse cx="259.2" cy="289.2" rx="1.3" ry="1.7" fill="#3c7cc8"/>
<circle cx="418.4" cy="291.0" r="2.6" fill="#1c6c58"/><path d="M418.4 287.9 L421.5 291.0 L418.4 294.1 L415.3 291.0 Z" fill="#1c6c58"/><ellipse cx="418.4" cy="291.0" rx="1.3" ry="1.7" fill="#3c7cc8"/>
<circle cx="445.5" cy="206.8" r="2.6" fill="#1c6c58"/><path d="M445.5 203.7 L448.6 206.8 L445.5 209.9 L442.4 206.8 Z" fill="#1c6c58"/><ellipse cx="445.5" cy="206.8" rx="1.3" ry="1.7" fill="#3c7cc8"/>
<circle cx="435.3" cy="365.1" r="2.6" fill="#1c6c58"/><path d="M435.3 362.0 L438.4 365.1 L435.3 368.2 L432.2 365.1 Z" fill="#1c6c58"/><ellipse cx="435.3" cy="365.1" rx="1.3" ry="1.7" fill="#3c7cc8"/>
<circle cx="509.0" cy="219.8" r="2.6" fill="#1c6c58"/><path d="M509.0 216.7 L512.1 219.8 L509.0 222.9 L505.9 219.8 Z" fill="#1c6c58"/><ellipse cx="509.0" cy="219.8" rx="1.3" ry="1.7" fill="#3c7cc8"/>
<circle cx="534.6" cy="280.0" r="2.6" fill="#1c6c58"/><path d="M534.6 276.9 L537.7 280.0 L534.6 283.1 L531.5 280.0 Z" fill="#1c6c58"/><ellipse cx="534.6" cy="280.0" rx="1.3" ry="1.7" fill="#3c7cc8"/>
<circle cx="377.6" cy="416.2" r="2.6" fill="#1c6c58"/><path d="M377.6 413.1 L380.7 416.2 L377.6 419.3 L374.5 416.2 Z" fill="#1c6c58"/><ellipse cx="377.6" cy="416.2" rx="1.3" ry="1.7" fill="#3c7cc8"/>
<circle cx="594.2" cy="272.7" r="2.6" fill="#1c6c58"/><path d="M594.2 269.6 L597.3 272.7 L594.2 275.8 L591.1 272.7 Z" fill="#1c6c58"/><ellipse cx="594.2" cy="272.7" rx="1.3" ry="1.7" fill="#3c7cc8"/>
<circle cx="450.0" cy="446.3" r="2.6" fill="#1c6c58"/><path d="M450.0 443.2 L453.1 446.3 L450.0 449.4 L446.9 446.3 Z" fill="#1c6c58"/><ellipse cx="450.0" cy="446.3" rx="1.3" ry="1.7" fill="#3c7cc8"/>
<circle cx="548.4" cy="390.0" r="2.6" fill="#1c6c58"/><path d="M548.4 386.9 L551.5 390.0 L548.4 393.1 L545.3 390.0 Z" fill="#1c6c58"/><ellipse cx="548.4" cy="390.0" rx="1.3" ry="1.7" fill="#3c7cc8"/>
<circle cx="508.4" cy="447.0" r="2.6" fill="#1c6c58"/><path d="M508.4 443.9 L511.5 447.0 L508.4 450.1 L505.3 447.0 Z" fill="#1c6c58"/><ellipse cx="508.4" cy="447.0" rx="1.3" ry="1.7" fill="#3c7cc8"/>
<rect x="416" y="285.3" width="5" height="5.6" fill="#c4c4f8"/>
<rect x="444.2" y="208.4" width="4.8" height="5.6" fill="#c4c4f8"/>
</svg>
</body></html>
